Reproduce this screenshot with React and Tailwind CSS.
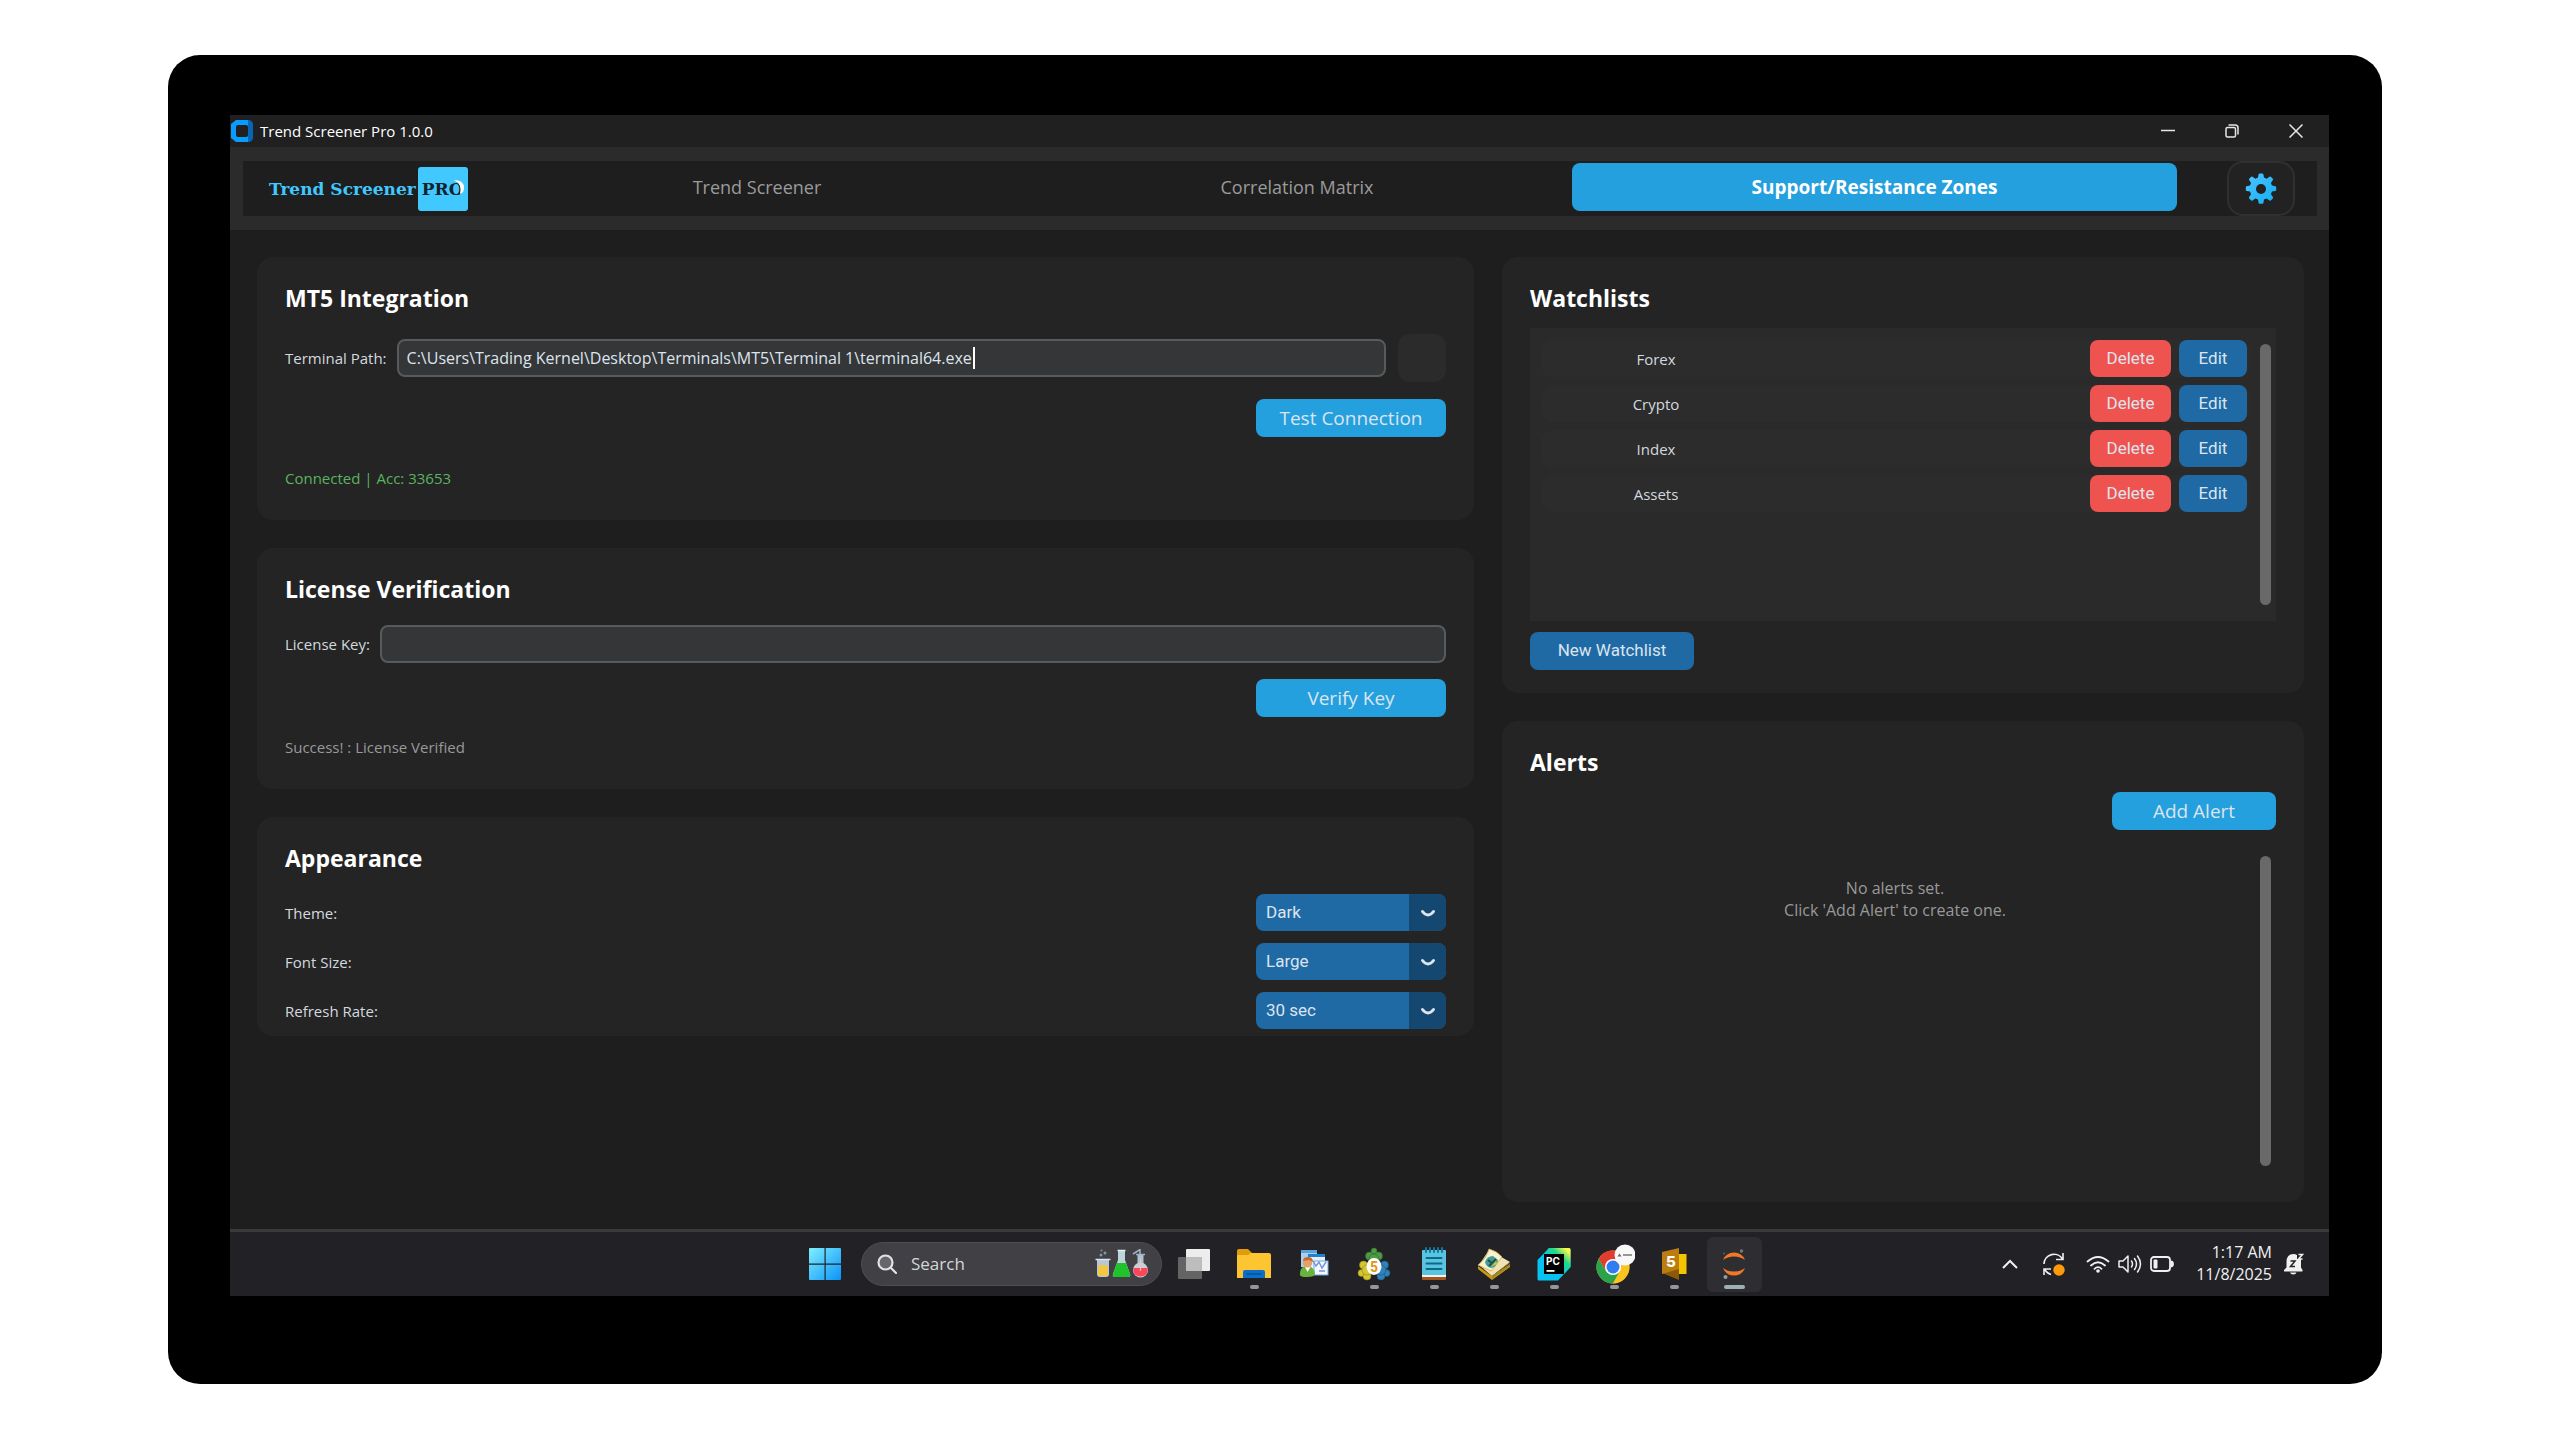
import React, { useState } from "react";

const watchlists = ["Forex", "Crypto", "Index", "Assets"];

const tabs = ["Trend Screener", "Correlation Matrix", "Support/Resistance Zones"];

const appearance = [
  { id: "theme", label: "Theme:", value: "Dark", options: ["Dark", "Light", "System"] },
  { id: "font-size", label: "Font Size:", value: "Large", options: ["Small", "Medium", "Large"] },
  { id: "refresh-rate", label: "Refresh Rate:", value: "30 sec", options: ["10 sec", "30 sec", "60 sec"] },
];

const Card = ({ title, className = "", children }) => (
  <section className={`flex flex-col rounded-2xl bg-[#242424] px-7 pt-[25px] ${className}`}>
    <h2 className="mb-px text-[23px] leading-8 font-bold text-white">{title}</h2>
    {children}
  </section>
);

const PrimaryButton = ({ className = "", children }) => (
  <button
    type="button"
    className={`h-[38px] shrink-0 self-end rounded-lg bg-[#24a0df] text-[19px] leading-6 text-[#dce4ee] cursor-pointer ${className}`}
  >
    {children}
  </button>
);

const SelectField = ({ id, label, value, options }) => (
  <div className="flex items-center justify-between">
    <label htmlFor={id} className="text-[15px] leading-6">
      {label}
    </label>
    <div className="relative h-[37px] w-[190px]">
      <select
        id={id}
        defaultValue={value}
        className="h-full w-full appearance-none rounded-lg bg-[#1f6aa5] px-2.5 font-[Roboto,sans-serif] text-[17px] text-[#dce4ee] outline-none"
      >
        {options.map((option) => (
          <option key={option}>{option}</option>
        ))}
      </select>
      <span className="pointer-events-none absolute inset-y-0 right-0 flex w-[37px] items-center justify-center rounded-r-lg bg-[#144870]">
        <svg viewBox="0 0 16 10" className="h-2.5 w-4" fill="none" stroke="#dce4ee" strokeWidth="3" strokeLinecap="round" strokeLinejoin="round">
          <path d="M2.500 3.500Q5 7 8 7t5.500-3.500" />
        </svg>
      </span>
    </div>
  </div>
);

const AppIcon = () => (
  <svg viewBox="0 0 22 22" className="h-[22px] w-[22px]">
    <path d="M5 0h12l5 4v14l-5 4H5l-5-4V4z" fill="#0a9bff" />
    <path d="M17 0c3 0 5 2 5 5v12c0 3-2 5-5 5l-1-5V5z" fill="#0566b8" />
    <path d="M5 0h12v6H5zM5 16h12v6H5z" fill="#0a9bff" />
    <rect x="5" y="5" width="12" height="12" rx="2" fill="#202020" />
  </svg>
);

const GearIcon = () => (
  <svg viewBox="0 0 32 32" className="h-8 w-8">
    <defs>
      <linearGradient id="gear" x1="0" y1="0" x2="1" y2="1">
        <stop offset="0" stopColor="#4cc6ff" />
        <stop offset="1" stopColor="#12aef5" />
      </linearGradient>
      <mask id="gearHole">
        <rect width="32" height="32" fill="#fff" />
        <circle cx="16" cy="16" r="5" fill="#000" />
      </mask>
    </defs>
    <g mask="url(#gearHole)" fill="url(#gear)">
      <path d="M13.6 1.2Q13.8.4 14.6.4h2.8q.8 0 1 .8l.6 3.4 2.6 1.1 2.9-2q.7-.5 1.3.1l2 2q.6.6.1 1.3l-2 2.9 1.1 2.6 3.4.6q.8.2.8 1v2.8q0 .8-.8 1l-3.4.6-1.1 2.6 2 2.9q.5.7-.1 1.3l-2 2q-.6.6-1.3.1l-2.9-2-2.6 1.1-.6 3.4q-.2.8-1 .8h-2.8q-.8 0-1-.8l-.6-3.4-2.6-1.1-2.9 2q-.7.5-1.3-.1l-2-2q-.6-.6-.1-1.3l2-2.9-1.1-2.6-3.4-.6q-.8-.2-.8-1v-2.8q0-.8.8-1l3.4-.6 1.1-2.6-2-2.9q-.5-.7.1-1.3l2-2q.6-.6 1.3-.1l2.9 2 2.6-1.1z" />
    </g>
  </svg>
);

const StartIcon = () => (
  <svg viewBox="0 0 32 32" className="h-8 w-8">
    <defs>
      <linearGradient id="start" x1="0" y1="0" x2="1" y2="1">
        <stop offset="0" stopColor="#7fefff" />
        <stop offset="1" stopColor="#0a93f8" />
      </linearGradient>
    </defs>
    <path
      d="M1 0h14.5v15.5H0V1q0-1 1-1zM16.700 0H31q1 0 1 1v14.500H16.700zM0 16.700h15.500V32H1q-1 0-1-1zM16.700 16.700H32V31q0 1-1 1H16.700z"
      fill="url(#start)"
    />
  </svg>
);

const FlasksIcon = () => (
  <svg viewBox="0 0 56 30" className="h-[30px] w-14">
    <path d="M4 11h12v14q0 3-3 3H7q-3 0-3-3z" fill="#b9c8d6" />
    <path d="M5 17q5-2 10 0v8q0 2-2 2H7q-2 0-2-2z" fill="#f2c744" />
    <path d="M2.500 10.500h15" stroke="#d9e6ef" strokeWidth="1.500" />
    <circle cx="8" cy="6" r="1.500" fill="#7c98ab" />
    <circle cx="12" cy="4" r="1.500" fill="#7c98ab" />
    <circle cx="8.500" cy="1.500" r="1" fill="#7c98ab" />
    <path d="M25 2h7v9l5 14q1 3-2 3H22q-3 0-2-3l5-14z" fill="#bcd5dd" />
    <path d="M24 14h9l4 11q1 3-2 3H22q-3 0-2-3z" fill="#1fc42b" />
    <path d="M24.500 1.500h8" stroke="#e5f0f5" strokeWidth="1.500" />
    <path d="M44.500 6h6v9h-6z" fill="#a9c3d2" />
    <circle cx="47.500" cy="21" r="7.500" fill="#c4cfd9" />
    <path d="M40.500 19h14q1 8-7 8.500-8-.5-7-8.500z" fill="#fb4658" />
    <path d="M43 5.500h9M40 5l7-4.500V5" stroke="#9fb3c1" strokeWidth="1.500" fill="none" />
    <path d="M47.500 10v12" stroke="#ffb9bd" strokeWidth="1.200" />
  </svg>
);

const TaskViewIcon = () => (
  <svg viewBox="0 0 32 32" className="h-8 w-8">
    <rect x="0" y="9" width="24" height="22" rx="1" fill="#646464" />
    <rect x="8" y="1" width="24" height="22" rx="1" fill="#ededed" />
    <rect x="8" y="9" width="16" height="14" fill="#bdbdbd" />
  </svg>
);

const FolderIcon = () => (
  <svg viewBox="0 0 34 32" className="h-8 w-[34px]">
    <path d="M0 3q0-2 2-2h9l4 4v6H0z" fill="#e19c0c" />
    <path d="M0 8q0-1 1-1h10l3-2h18q2 0 2 2v23H0z" fill="#fdc531" />
    <path d="M6 30v-6q0-2 2-2h18q2 0 2 2v6z" fill="#0a6fc8" />
    <path d="M9.500 26h15" stroke="#0a4f94" strokeWidth="1.500" />
  </svg>
);

const UserPanelsIcon = () => (
  <svg viewBox="0 0 30 30" className="h-[30px] w-[30px]">
    <rect x="2" y="1" width="16" height="17" fill="#a9d0ee" />
    <rect x="2" y="1" width="16" height="3" fill="#5ba3dc" />
    <rect x="9" y="5" width="17" height="18" fill="#e4f0fb" />
    <rect x="9" y="5" width="17" height="3" fill="#1f80d2" />
    <rect x="15" y="12" width="14" height="14" fill="#f3f9ff" stroke="#6aaae0" />
    <path d="m14 12 3 5 3-4 3 6 4-6M20 22h6" stroke="#7a8fd8" strokeWidth="1.400" fill="none" />
    <path d="M1 25q0-8 7-8t8 8q0 3-8 3t-7-3z" fill="#69b23b" />
    <path d="m6 18 2.500 5 3-5z" fill="#fff" />
    <circle cx="8.500" cy="14" r="4.700" fill="#e7a06c" />
    <path d="M4 12q0-4 5-4t5 5l-4-2z" fill="#c96a26" />
  </svg>
);

const TerminalIcon = () => (
  <svg viewBox="0 0 34 34" className="h-[34px] w-[34px]">
    <g fill="#4f9b45" stroke="#2d6b2a" strokeWidth=".6">
      <circle cx="17" cy="4" r="3" />
      <circle cx="12.500" cy="9" r="4" />
      <circle cx="21.500" cy="9" r="4" />
      <circle cx="17" cy="12" r="5" />
    </g>
    <g fill="#d6c62f" stroke="#8f8519" strokeWidth=".6">
      <circle cx="6.500" cy="18" r="4" />
      <circle cx="4.500" cy="26" r="3.500" />
      <circle cx="10" cy="29" r="4" />
      <circle cx="10" cy="23" r="5" />
    </g>
    <g fill="#2f83b8" stroke="#17567f" strokeWidth=".6">
      <circle cx="27.500" cy="18" r="4" />
      <circle cx="29.500" cy="26" r="3.500" />
      <circle cx="24" cy="29" r="4" />
      <circle cx="24" cy="23" r="5" />
    </g>
    <ellipse cx="17" cy="19.500" rx="7.500" ry="8.500" fill="#fff" />
    <text x="17" y="24.500" textAnchor="middle" fontSize="14" fontWeight="700" fontFamily="Roboto, sans-serif" fill="#e3940f">
      5
    </text>
  </svg>
);

const NotepadIcon = () => (
  <svg viewBox="0 0 26 34" className="h-[34px] w-[26px]">
    <rect x="1" y="28" width="24" height="5" rx="1" fill="#a4531c" />
    <rect x="1" y="27" width="24" height="3" fill="#f1f1f1" />
    <rect x="1" y="3" width="24" height="25" rx="1" fill="#5ac3e0" />
    <path d="M5 1v4M9 1v4M13 1v4M17 1v4M21 1v4" stroke="#137a9b" strokeWidth="2" strokeLinecap="round" />
    <path d="M5.500 11h15M5.500 16.500h15M5.500 22h15" stroke="#0c6a89" strokeWidth="2" strokeLinecap="round" />
  </svg>
);

const BookIcon = () => (
  <svg viewBox="0 0 34 34" className="h-[34px] w-[34px]">
    <path d="m1 19 14 10L33 17v3L15 33 1 22z" fill="#c99a10" />
    <path d="m12 3 21 12-18 14L2 18z" fill="#efe3b4" />
    <path d="M15 31 33 18M15 29.500 32.500 16" stroke="#8b7a36" strokeWidth="1" />
    <path d="M12 2q8 2 13 8l-11 14L1 18q8-6 11-16z" fill="#fbf2cc" stroke="#c9ac4c" strokeWidth=".8" />
    <path d="M8 15q2-6 8-6l5 4q-1 7-7 8-5-1-6-6z" fill="#3f9da0" />
    <path d="m11 13 4 3 4-4M12 19l3-3" stroke="#24543c" strokeWidth="2" fill="none" />
    <path d="m14 20 5-6 1 3z" fill="#d8c437" />
  </svg>
);

const PyCharmIcon = () => (
  <svg viewBox="0 0 34 34" className="h-[34px] w-[34px]">
    <defs>
      <linearGradient id="pycharm" x1="0.300" y1="0.700" x2="1" y2="0">
        <stop offset="0" stopColor="#00c4f4" />
        <stop offset=".5" stopColor="#21d789" />
        <stop offset=".85" stopColor="#fcf84a" />
      </linearGradient>
    </defs>
    <path d="M12 1h20q1.500 0 1.500 1.500V20L21 33.500H2Q.5 33.500.5 32V13z" fill="#07c3f2" />
    <path d="M12 1h20q1.500 0 1.500 1.500V20L27 27V8H6.500z" fill="url(#pycharm)" />
    <rect x="7" y="7" width="20" height="20" fill="#000" />
    <text x="9" y="17.500" fontSize="10" fontWeight="700" fontFamily="Inter, sans-serif" fill="#fff">
      PC
    </text>
    <rect x="9.500" y="23" width="8" height="1.800" fill="#fff" />
  </svg>
);

const ChromeIcon = () => (
  <svg viewBox="0 0 42 42" className="h-[42px] w-[42px]">
    <circle cx="20" cy="24" r="16.500" fill="#fcc31e" />
    <path d="M5.700 15.750A16.500 16.500 0 0 1 34.300 15.750L20 16.500 13 28z" fill="#e33b2e" />
    <path d="M5.700 15.750A16.500 16.500 0 0 0 20 40.500L27 28l-14 0z" fill="#2ba24c" />
    <path d="M20 16h14.300A16.500 16.500 0 0 1 20 40.500L27 28z" fill="#fcc31e" />
    <circle cx="20" cy="24" r="8" fill="#fff" />
    <circle cx="20" cy="24" r="6.500" fill="#2f7df0" />
    <circle cx="32" cy="12" r="10.500" fill="#f8f8f8" />
    <path d="m24.500 13.500 2-3 2 3z" fill="#666" />
    <path d="M30 12h9" stroke="#8c8c8c" strokeWidth="1.800" />
  </svg>
);

const SublimeIcon = () => (
  <svg viewBox="0 0 26 34" className="h-[34px] w-[26px]">
    <path d="M13 7h12.500v20H10z" fill="#f5c400" />
    <path d="M1 26l17-5v12z" fill="#8a5a06" />
    <path d="M1 5 18 1v21L1 27z" fill="#bb7d0f" />
    <text x="5" y="20" fontSize="15" fontWeight="800" fontFamily="Inter, sans-serif" fill="#fff">
      5
    </text>
  </svg>
);

const JupyterIcon = () => (
  <svg viewBox="0 0 26 30" className="h-[30px] w-[26px]">
    <path d="M2 11q3-7.500 11-7.500T24 11Q19.500 7.500 13 7.500T2 11z" fill="#f37726" />
    <path d="M2 19q3 7.500 11 7.500T24 19Q19.500 22.500 13 22.500T2 19z" fill="#f37726" />
    <circle cx="20.500" cy="2" r="1.700" fill="#77797a" />
    <circle cx="3" cy="4.500" r="1.100" fill="#5b5c5d" />
    <circle cx="4.500" cy="28" r="2" fill="#9b9b9b" />
  </svg>
);

const taskbarApps = [
  { name: "Task View", Icon: TaskViewIcon },
  { name: "File Explorer", Icon: FolderIcon, open: true },
  { name: "User Panels", Icon: UserPanelsIcon },
  { name: "MetaTrader 5", Icon: TerminalIcon, open: true },
  { name: "Notepad", Icon: NotepadIcon, open: true },
  { name: "MetaEditor", Icon: BookIcon, open: true },
  { name: "PyCharm", Icon: PyCharmIcon, open: true },
  { name: "Chrome", Icon: ChromeIcon, open: true },
  { name: "Sublime", Icon: SublimeIcon, open: true },
  { name: "Trend Screener Pro", Icon: JupyterIcon, open: true, active: true },
];

const TitleBar = () => (
  <div className="flex h-8 items-center justify-between bg-[#202020] pr-px pl-px">
    <div className="flex items-center gap-[7px]">
      <AppIcon />
      <span className="text-[15px] leading-6 text-white">Trend Screener Pro 1.0.0</span>
    </div>
    <div className="flex h-full text-[#e6e6e6]">
      <button type="button" aria-label="Minimize" className="flex w-16 items-center justify-center">
        <svg viewBox="0 0 14 14" className="h-3.5 w-3.5" fill="none" stroke="currentColor" strokeWidth="1.500">
          <path d="M0 6.500h14" />
        </svg>
      </button>
      <button type="button" aria-label="Restore" className="flex w-16 items-center justify-center">
        <svg viewBox="0 0 14 14" className="h-3.5 w-3.5" fill="none" stroke="currentColor" strokeWidth="1.500">
          <rect x="1" y="3.500" width="9.500" height="9.500" rx="1.500" />
          <path d="M3.500 1H10q3 0 3 3v6.500" />
        </svg>
      </button>
      <button type="button" aria-label="Close" className="flex w-16 items-center justify-center">
        <svg viewBox="0 0 14 14" className="h-3.5 w-3.5" fill="none" stroke="currentColor" strokeWidth="1.500">
          <path d="m.5.5 13 13M13.500.5l-13 13" />
        </svg>
      </button>
    </div>
  </div>
);

const Header = ({ activeTab, onSelect }) => (
  <header className="bg-[#2b2b2b] py-3.5 pr-3 pl-[13px]">
    <div className="flex h-[55px] items-center bg-[#1e1e1e] pr-[22px] pl-[26px]">
      <div className="flex w-[223px] shrink-0 items-center gap-0.5">
        <span className="font-['DejaVu_Serif',serif] text-[17px] leading-6 font-bold whitespace-nowrap text-[#40c8ff]">
          Trend Screener
        </span>
        <span className="relative flex h-11 w-[50px] shrink-0 items-center justify-center rounded-[3px] bg-[#40c8ff] font-['DejaVu_Serif',serif] text-[17px] leading-6 font-bold text-[#12222c]">
          PRO
          <svg viewBox="0 0 10 14" className="absolute top-[13px] right-1 h-3.5 w-2.5">
            <path d="M0 0q10 0 10 8 0 5-4 6 1-4 0-8Q4 2 0 0z" fill="#fff" />
          </svg>
        </span>
      </div>
      <nav className="mb-1 grid h-12 flex-1 grid-cols-[530fr_530fr_605fr] gap-2.5">
        {tabs.map((tab) => (
          <button
            key={tab}
            type="button"
            onClick={() => onSelect(tab)}
            className={`rounded-lg leading-6 cursor-pointer ${
              activeTab === tab ? "bg-[#24a0df] text-[19px] font-bold text-white" : "text-[18px] text-[#9b9b9b]"
            }`}
          >
            {tab}
          </button>
        ))}
      </nav>
      <button
        type="button"
        aria-label="Settings"
        className="ml-[50px] flex h-[55px] w-[68px] shrink-0 items-center justify-center rounded-2xl border-2 border-[#303030] bg-[#222222] cursor-pointer"
      >
        <GearIcon />
      </button>
    </div>
  </header>
);

const Taskbar = () => (
  <footer className="grid h-[67px] shrink-0 grid-cols-[1fr_auto_1fr] border-t-3 border-[#3a3a3c] bg-[#212126]">
    <div />
    <div className="flex items-center">
      <button type="button" aria-label="Start" className="flex w-[60px] justify-center">
        <StartIcon />
      </button>
      <label className="mr-0.5 ml-1.5 flex h-11 w-[301px] items-center rounded-full border border-[#4d4d52] bg-[#404045] pr-3 pl-[15px]">
        <svg viewBox="0 0 20 20" className="h-5 w-5 shrink-0" fill="none" stroke="#e2e2e2" strokeWidth="2.200" strokeLinecap="round">
          <circle cx="8.500" cy="8.500" r="7" fill="#66666b" />
          <path d="m14 14 5 5" />
        </svg>
        <input
          type="text"
          placeholder="Search"
          aria-label="Search"
          className="ml-3.5 w-0 flex-1 bg-transparent text-[17px] leading-6 outline-none placeholder:text-[#d6d6d6]"
        />
        <FlasksIcon />
      </label>
      {taskbarApps.map(({ name, Icon, open, active }) => (
        <button
          key={name}
          type="button"
          aria-label={name}
          className="relative flex h-16 w-[60px] items-center justify-center"
        >
          <span
            className={`flex h-[55px] w-[55px] items-center justify-center rounded-md ${active ? "bg-[#2e2e32]" : ""}`}
          >
            <Icon />
          </span>
          {open && (
            <span
              className={`absolute bottom-[7px] h-1 rounded-full ${active ? "w-[21px] bg-[#9fb0b5]" : "w-[9px] bg-[#97979b]"}`}
            />
          )}
        </button>
      ))}
    </div>
    <div className="flex items-center justify-end pr-[25px] text-[#f0f0f0]">
      <svg viewBox="0 0 16 10" className="mr-6 h-2.5 w-4" fill="none" stroke="currentColor" strokeWidth="2">
        <path d="m1 9 7-7 7 7" />
      </svg>
      <svg viewBox="0 0 24 24" className="mr-5 h-6 w-6" fill="none" stroke="currentColor" strokeWidth="1.600">
        <path d="M2 12a10 10 0 0 1 18.500-5M21 1v6.500h-7M2 23v-6h7M3 17.500q2 4 6 5" />
        <circle cx="17" cy="18" r="5.700" fill="#ff9a0a" stroke="none" />
      </svg>
      <svg viewBox="0 0 24 20" className="mr-2 h-5 w-6" fill="none" stroke="currentColor" strokeWidth="1.800" strokeLinecap="round">
        <path d="M1.500 7.500q10.500-9 21 0M5 11.500q7-6.500 14 0M8.500 14.800q3.500-3.300 7 0" />
        <circle cx="12" cy="17" r="1.800" fill="currentColor" stroke="none" />
      </svg>
      <svg viewBox="0 0 24 20" className="mr-2 h-5 w-6" fill="none" stroke="currentColor" strokeWidth="1.500" strokeLinecap="round" strokeLinejoin="round">
        <path d="M1 7h4l5-5v16l-5-5H1zM13.500 7q2 3 0 6M16.500 4.500q4 5.500 0 11M19.500 2q6 8 0 16" />
      </svg>
      <svg viewBox="0 0 24 16" className="mr-[22px] h-4 w-6" fill="none" stroke="currentColor" strokeWidth="1.800">
        <rect x="1" y="1" width="19" height="14" rx="3" />
        <path d="M20.500 5.500q2.500 0 2.500 2.500t-2.500 2.500" fill="currentColor" />
        <rect x="3.500" y="3.500" width="4" height="9" rx="1" fill="currentColor" stroke="none" />
      </svg>
      <div className="flex flex-col pb-0.5 text-right text-[16px] leading-[22px]">
        <span>1:17 AM</span>
        <span>11/8/2025</span>
      </div>
      <svg viewBox="0 0 20 22" className="ml-3 h-[22px] w-5">
        <path d="M2.500 14.500V9q0-8 7-8 2 0 3.500 1v4h4v8.500l1.500 2.500q.5 1.500-1 1.500H1q-1.500 0-1-1.500zM6 19.500h6.500q-.5 2-3.200 2T6 19.500z" fill="currentColor" />
        <path d="M6.500 8h4.500L6.500 13.500H11" stroke="#212126" strokeWidth="1.500" fill="none" />
        <path d="M14.500 1.500h4L14.500 6h4" stroke="currentColor" strokeWidth="1.500" fill="none" />
      </svg>
    </div>
  </footer>
);

const App = () => {
  const [activeTab, setActiveTab] = useState(tabs[2]);

  return (
    <div className="flex min-h-screen bg-white pt-[55px] pr-[178px] pb-14 pl-[168px] font-['Open_Sans',sans-serif] text-[#d3d9df]">
      <div className="flex flex-1 rounded-[32px] bg-black pt-[60px] pr-[53px] pb-[88px] pl-[62px]">
        <div className="flex flex-1 flex-col bg-[#1e1e1e]">
          <TitleBar />
          <Header activeTab={activeTab} onSelect={setActiveTab} />

          <main className="grid flex-1 grid-cols-[1217fr_802fr] gap-7 pt-[27px] pr-[25px] pb-[27px] pl-[27px]">
            <div className="flex flex-col gap-7">
              <Card title="MT5 Integration" className="pb-[30px]">
                <div className="mt-[19px] flex items-center">
                  <label htmlFor="terminal-path" className="text-[15px] leading-6">
                    Terminal Path:
                  </label>
                  <div className="relative ml-2.5 flex-1">
                    <input
                      id="terminal-path"
                      type="text"
                      defaultValue="C:\Users\Trading Kernel\Desktop\Terminals\MT5\Terminal 1\terminal64.exe"
                      className="block h-[38px] w-full rounded-lg border-2 border-[#565b5e] bg-[#343638] px-2 text-[16px] leading-6 text-[#dce4ee] outline-none"
                    />
                    <span className="absolute top-2 left-[576px] h-[22px] w-0.5 bg-white" />
                  </div>
                  <button
                    type="button"
                    aria-label="Browse"
                    className="ml-3 h-12 w-12 rounded-xl bg-[#2b2b2b] cursor-pointer"
                  />
                </div>
                <PrimaryButton className="mt-[17px] w-[190px]">Test Connection</PrimaryButton>
                <p className="mt-[29px] text-[15px] leading-6 text-[#5bb35f]">Connected | Acc: 33653</p>
              </Card>

              <Card title="License Verification" className="pb-[30px]">
                <div className="mt-[19px] flex items-center">
                  <label htmlFor="license-key" className="text-[15px] leading-6">
                    License Key:
                  </label>
                  <input
                    id="license-key"
                    type="text"
                    className="ml-2.5 h-[38px] flex-1 rounded-lg border-2 border-[#565b5e] bg-[#343638] px-2 text-[16px] leading-6 text-[#dce4ee] outline-none"
                  />
                </div>
                <PrimaryButton className="mt-4 w-[190px]">Verify Key</PrimaryButton>
                <p className="mt-[18px] text-[15px] leading-6 text-[#999999]">Success! : License Verified</p>
              </Card>

              <Card title="Appearance" className="pb-[7px]">
                <div className="mt-[19px] flex flex-col gap-3">
                  {appearance.map((field) => (
                    <SelectField key={field.id} {...field} />
                  ))}
                </div>
              </Card>
            </div>

            <div className="flex flex-col gap-7">
              <Card title="Watchlists" className="pb-[23px]">
                <div className="mt-[13px] flex h-[293px] bg-[#2a2a2a] py-3 pr-[5px] pl-[11px]">
                  <ul className="flex flex-1 flex-col gap-2">
                    {watchlists.map((name) => (
                      <li key={name} className="flex h-[37px] items-center gap-2 rounded-xl bg-[#2c2c2c] pr-[3px]">
                        <span className="w-[230px] text-center text-[15px] leading-6">{name}</span>
                        <button
                          type="button"
                          className="ml-auto h-[37px] w-[81px] rounded-lg bg-[#ef5350] font-[Roboto,sans-serif] text-[17px] text-[#dce4ee] cursor-pointer"
                        >
                          Delete
                        </button>
                        <button
                          type="button"
                          className="h-[37px] w-[68px] rounded-lg bg-[#1f6aa5] font-[Roboto,sans-serif] text-[17px] text-[#dce4ee] cursor-pointer"
                        >
                          Edit
                        </button>
                      </li>
                    ))}
                  </ul>
                  <div className="mt-1 mb-1 ml-2.5 w-[11px] rounded-full bg-[#696969]" />
                </div>
                <button
                  type="button"
                  className="mt-[11px] h-[38px] w-[164px] rounded-lg bg-[#1f6aa5] font-[Roboto,sans-serif] text-[17px] text-[#dce4ee] cursor-pointer"
                >
                  New Watchlist
                </button>
              </Card>

              <Card title="Alerts" className="flex-1 pb-9">
                <PrimaryButton className="mt-[13px] w-[164px]">Add Alert</PrimaryButton>
                <div className="mt-[26px] flex flex-1 pr-[5px]">
                  <div className="flex-1 pt-[21px] text-center text-[16px] leading-[22px] text-[#999999]">
                    <p>No alerts set.</p>
                    <p>Click 'Add Alert' to create one.</p>
                  </div>
                  <div className="w-[11px] rounded-full bg-[#696969]" />
                </div>
              </Card>
            </div>
          </main>

          <Taskbar />
        </div>
      </div>
    </div>
  );
};

export default App;
